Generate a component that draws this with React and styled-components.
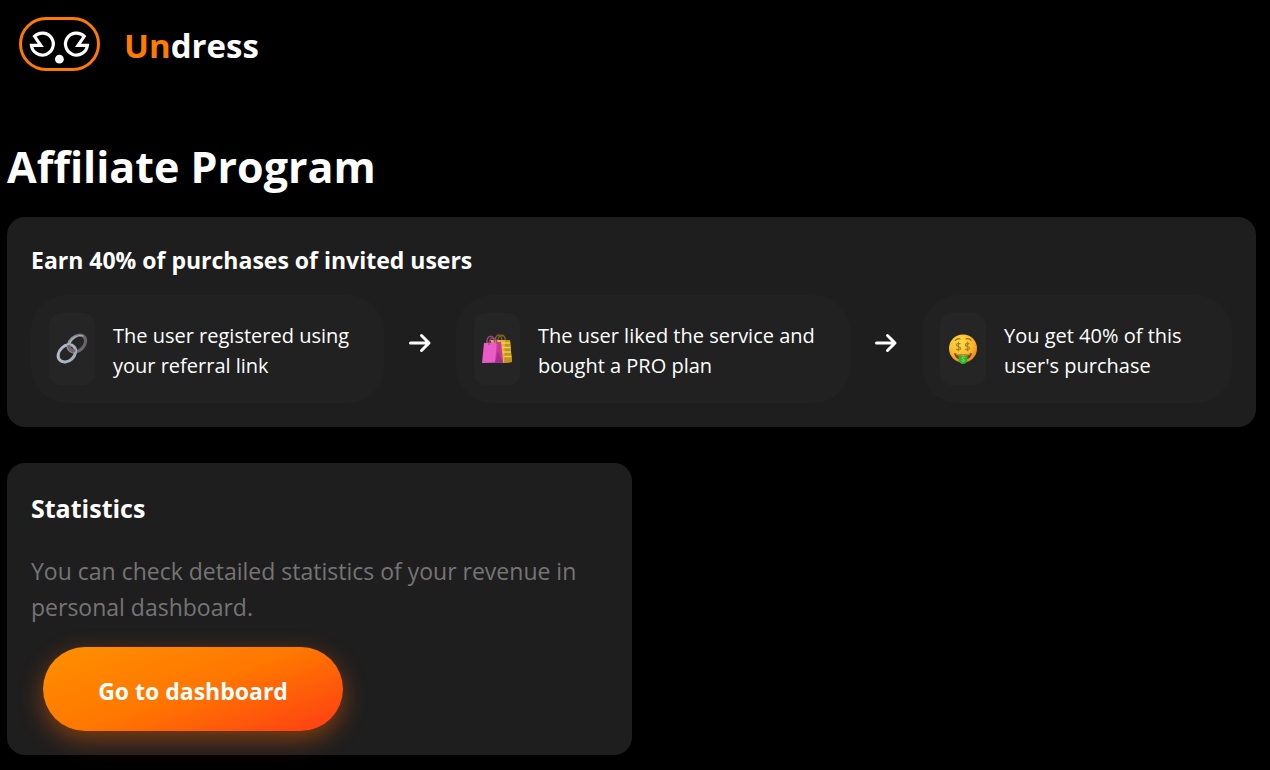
import { Fragment } from "react";
import styled, { createGlobalStyle } from "styled-components";

const GlobalStyle = createGlobalStyle`
  * {
    box-sizing: border-box;
  }

  body {
    margin: 0;
    background-color: #000;
    color: #fff;
    font-family: "Segoe UI", "Open Sans", "Noto Sans", sans-serif;
  }

  h1,
  h2,
  p {
    margin: 0;
  }
`;

const Logo = () => (
  <svg width="81" height="54" viewBox="0 0 81 54" fill="none" aria-hidden="true">
    <rect x="1.5" y="1.5" width="78" height="51" rx="25.5" stroke="#ff7b00" strokeWidth="3" />
    <g stroke="#fff" strokeWidth="3.2" strokeLinejoin="miter">
      <path d="M12.4 28.4H21.8L15.5 19.3A11 11 0 1 1 12.4 28.4Z" />
      <path d="M68.4 28.4H59L65.3 19.3A11 11 0 1 0 68.4 28.4Z" />
    </g>
    <circle cx="40.4" cy="42.2" r="4.4" fill="#fff" />
  </svg>
);

const LinkIcon = () => (
  <svg width="32" height="32" viewBox="0 0 32 32" fill="none" aria-hidden="true">
    <defs>
      <linearGradient id="chainBack" x1="0" y1="0" x2="1" y2="1">
        <stop offset="0" stopColor="#9aa3ae" />
        <stop offset=".5" stopColor="#777379" />
        <stop offset="1" stopColor="#625a5e" />
      </linearGradient>
      <linearGradient id="chainFront" x1="0" y1="0" x2="1" y2="1">
        <stop offset="0" stopColor="#b4c0cc" />
        <stop offset="1" stopColor="#a3abb8" />
      </linearGradient>
    </defs>
    <ellipse cx="21" cy="10.6" rx="9.8" ry="7" transform="rotate(-43 21 10.6)" stroke="url(#chainBack)" strokeWidth="3.2" />
    <path d="M13.4 10.4C15.5 5.4 22 .6 27.4 3.2" stroke="#aeb7c4" strokeWidth="1.1" />
    <ellipse cx="10.9" cy="20.4" rx="9.8" ry="7.4" transform="rotate(-43 10.9 20.4)" stroke="url(#chainFront)" strokeWidth="3" />
    <path d="M12.6 12C13 15.4 15 17.8 19.4 18" stroke="#6f666c" strokeWidth="3" />
  </svg>
);

const BagsIcon = () => (
  <svg width="32" height="32" viewBox="0 0 32 32" fill="none" aria-hidden="true">
    <path d="M14 8C15 0 20.5 0 21 8M17 7C18 .5 24 .5 24.5 8" stroke="#806128" strokeWidth="1.4" />
    <path d="M9 7H29L31 29L22 30Z" fill="#dfb52b" />
    <path d="M24 7H29L31 29L23 30Z" fill="#c3921f" />
    <path d="M18 10H29M20 14.5H29.5M22 19H30M23 23.5H30.3" stroke="#ecd04c" strokeWidth="1.5" />
    <path d="M6 12C5 1 13 .5 14 11" stroke="#8a497c" strokeWidth="1.6" />
    <path d="M3 10L20 9L22 29.5L1 30Z" fill="#e95bc5" />
    <path d="M16 9.2L20 9L22 29.5L14 29.7Z" fill="#c63a96" />
    <path d="M17 19L22 29.5L14 29.7Z" fill="#a02d90" />
    <path d="M8 12C7 4 16 2 16 11" stroke="#9d457f" strokeWidth="1.2" />
  </svg>
);

const MoneyFaceIcon = () => (
  <svg width="32" height="32" viewBox="0 0 32 32" aria-hidden="true">
    <defs>
      <radialGradient id="face" cx=".4" cy=".3" r=".75">
        <stop offset="0" stopColor="#ffdf45" />
        <stop offset=".6" stopColor="#fdb62a" />
        <stop offset="1" stopColor="#e8821d" />
      </radialGradient>
    </defs>
    <circle cx="16" cy="15.5" r="14" fill="url(#face)" />
    <path d="M8.3 7.4Q11 5 13 6M19 6Q22 5 24 7.4" fill="none" stroke="#9a6226" strokeWidth="1.2" strokeLinecap="round" />
    <g fill="none" stroke="#a98230" strokeWidth="1.3">
      <path d="M13.5 11.2C12.5 9.8 9.4 10 9.4 12C9.4 14 13.6 13 13.6 15.3C13.6 17.3 10.2 17.4 9.2 15.9M11.5 8.8V18.3" />
      <path d="M22.5 11.2C21.5 9.8 18.4 10 18.4 12C18.4 14 22.6 13 22.6 15.3C22.6 17.3 19.2 17.4 18.2 15.9M20.5 8.8V18.3" />
    </g>
    <path d="M7 20Q16 23 25 20C24 25 20.5 27 16 27S8 25 7 20Z" fill="#7c4214" />
    <path d="M9 20.7Q16 23 23 20.7L22.4 22Q16 24 9.6 22Z" fill="#d9a95c" />
    <path d="M11.5 22.3Q16 23 20.5 22.3V27A4.5 4 0 0 1 11.5 27Z" fill="#35b32b" />
    <path d="M17.6 24.5C16.8 23.6 14.8 24 15 25.2C15.3 26.4 17.5 26 17.4 27.4C17.2 28.6 15.2 28.5 14.6 27.6" fill="none" stroke="#8be060" strokeWidth="1" />
  </svg>
);

const ArrowIcon = () => (
  <svg width="24" height="24" viewBox="0 0 24 24" fill="none" aria-hidden="true">
    <path d="M2.5 12H20.5M13.5 4.5L21 12L13.5 19.5" stroke="#fff" strokeWidth="3" strokeLinecap="round" strokeLinejoin="round" />
  </svg>
);

const steps = [
  { icon: <LinkIcon />, lines: ["The user registered using", "your referral link"] },
  { icon: <BagsIcon />, lines: ["The user liked the service and", "bought a PRO plan"] },
  { icon: <MoneyFaceIcon />, lines: ["You get 40% of this", "user's purchase"] },
];

const App = () => {
  return (
    <>
      <GlobalStyle />

      <Header>
        <Brand href="#">
          <Logo />
          <BrandName>
            <span>Un</span>dress
          </BrandName>
        </Brand>
      </Header>

      <Main>
        <Title>Affiliate Program</Title>

        <Card>
          <CardTitle>Earn 40% of purchases of invited users</CardTitle>
          <Steps>
            {steps.map(({ icon, lines }, i) => (
              <Fragment key={lines[0]}>
                {i > 0 && (
                  <Arrow>
                    <ArrowIcon />
                  </Arrow>
                )}
                <Step>
                  <StepIcon>{icon}</StepIcon>
                  <StepText>
                    {lines[0]}
                    <br />
                    {lines[1]}
                  </StepText>
                </Step>
              </Fragment>
            ))}
          </Steps>
        </Card>

        <Card $half>
          <CardTitle $large>Statistics</CardTitle>
          <Description>
            You can check detailed statistics of your revenue in personal
            dashboard.
          </Description>
          <DashboardButton type="button">Go to dashboard</DashboardButton>
        </Card>
      </Main>
    </>
  );
};

const Header = styled.header`
  display: flex;
  padding: 17px 19px 0;
`;

const Brand = styled.a`
  display: flex;
  align-items: flex-start;
  gap: 24px;
  color: #fff;
  text-decoration: none;
`;

const BrandName = styled.span`
  font-size: 33px;
  line-height: 54px;
  font-weight: 700;
  padding-top: 2px;

  span {
    color: #ff7b00;
  }
`;

const Main = styled.main`
  padding: 64px 14px 14px 7px;
`;

const Title = styled.h1`
  font-size: 43px;
  line-height: 60px;
  font-weight: 700;
  margin-bottom: 20px;
`;

const Card = styled.section`
  width: ${(props) => (props.$half ? "50%" : "100%")};
  padding: 24px;
  border-radius: 18px;
  background-color: #1e1e1e;

  & + & {
    margin-top: 36px;
  }
`;

const CardTitle = styled.h2`
  font-size: ${(props) => (props.$large ? "25px" : "23px")};
  line-height: ${(props) => (props.$large ? "42px" : "38px")};
  font-weight: 700;
  margin-bottom: ${(props) => (props.$large ? "24px" : "16px")};
`;

const Steps = styled.div`
  display: grid;
  grid-template-columns: 353fr 24px 394fr 24px 310fr;
  gap: 24px;

  @media only screen and (max-width: 1024px) {
    grid-template-columns: 1fr;
  }
`;

const Step = styled.div`
  display: flex;
  gap: 18px;
  padding: 18px;
  border-radius: 36px;
  background-color: #212121;
`;

const StepIcon = styled.div`
  display: flex;
  align-items: center;
  justify-content: center;
  flex-shrink: 0;
  width: 46px;
  height: 72px;
  border-radius: 12px;
  background-color: #252525;
`;

const StepText = styled.p`
  align-self: center;
  padding-top: 4px;
  font-size: 20px;
  line-height: 30px;
  white-space: nowrap;
`;

const Arrow = styled.div`
  display: flex;
  align-items: center;
  justify-content: center;
  padding-bottom: 12px;
`;

const Description = styled.p`
  font-size: 23px;
  line-height: 36px;
  color: #757575;
`;

const DashboardButton = styled.button`
  width: 300px;
  height: 84px;
  margin: 22px 12px 0;
  padding: 4px 0 0;
  border: none;
  border-radius: 42px;
  background: linear-gradient(160deg, #ff9000 0%, #ff7700 50%, #ff3c14 100%);
  box-shadow: 0 8px 24px rgba(255, 102, 0, 0.45);
  color: #fff;
  font-family: inherit;
  font-size: 23px;
  font-weight: 700;
  cursor: pointer;
`;

export default App;
